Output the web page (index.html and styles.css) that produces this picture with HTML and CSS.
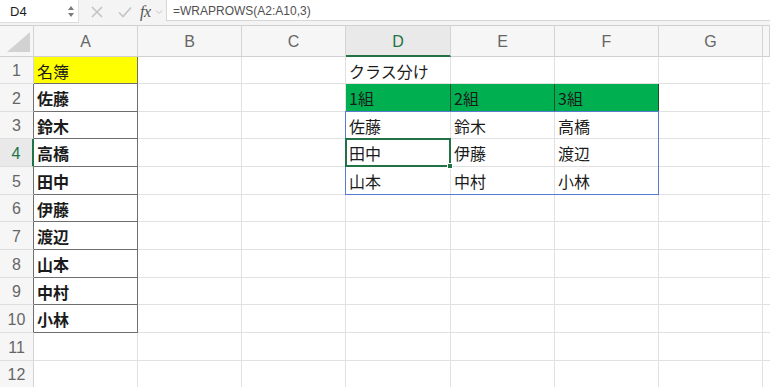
FILE: index.html
```html
<!DOCTYPE html>
<html lang="ja">
<head>
<meta charset="utf-8">
<link rel="stylesheet" href="styles.css">
</head>
<body>
<div class="fbar">
  <div class="namebox">
    <span class="nb-text">D4</span>
    <span class="spin"><span class="up"></span><span class="dn"></span></span>
  </div>
  <div class="ficons">
    <svg class="ic-x" width="14" height="14" viewBox="0 0 14 14"><path d="M2 2 L12 12 M12 2 L2 12" stroke="#c4c4c4" stroke-width="1.6" fill="none"/></svg>
    <svg class="ic-ok" width="16" height="14" viewBox="0 0 16 14"><path d="M2 7.5 L6 11.5 L14 2.5" stroke="#c4c4c4" stroke-width="1.6" fill="none"/></svg>
    <span class="fx">fx</span>
    <svg class="ic-chev" width="8" height="6" viewBox="0 0 8 6"><path d="M1 1.5 L4 4.5 L7 1.5" stroke="#c4c4c4" stroke-width="1" fill="none"/></svg>
  </div>
  <div class="finput">=WRAPROWS(A2:A10,3)</div>
</div>
<div class="sheet">
  <div class="row hdr">
    <div class="rh corner"><span class="tri"></span></div>
    <div class="c ch">A</div><div class="c ch">B</div><div class="c ch">C</div><div class="c w ch sel">D</div><div class="c ch">E</div><div class="c ch">F</div><div class="c ch">G</div><div class="tail ch"></div>
  </div>
  <div class="row h27">
    <div class="rh">1</div>
    <div class="c yel bb">名簿</div><div class="c"></div><div class="c"></div><div class="c w">クラス分け</div><div class="c"></div><div class="c"></div><div class="c"></div><div class="tail"></div>
  </div>
  <div class="row h28">
    <div class="rh dk">2</div>
    <div class="c bx">佐藤</div><div class="c"></div><div class="c"></div><div class="c w grn">1組</div><div class="c grn">2組</div><div class="c grn">3組</div><div class="c"></div><div class="tail"></div>
  </div>
  <div class="row h27">
    <div class="rh dk">3</div>
    <div class="c bx">鈴木</div><div class="c"></div><div class="c"></div><div class="c w">佐藤</div><div class="c">鈴木</div><div class="c">高橋</div><div class="c"></div><div class="tail"></div>
  </div>
  <div class="row h28">
    <div class="rh selr">4</div>
    <div class="c bx">高橋</div><div class="c"></div><div class="c"></div><div class="c w">田中</div><div class="c">伊藤</div><div class="c">渡辺</div><div class="c"></div><div class="tail"></div>
  </div>
  <div class="row h28">
    <div class="rh dk">5</div>
    <div class="c bx">田中</div><div class="c"></div><div class="c"></div><div class="c w">山本</div><div class="c">中村</div><div class="c">小林</div><div class="c"></div><div class="tail"></div>
  </div>
  <div class="row h27">
    <div class="rh dk">6</div>
    <div class="c bx">伊藤</div><div class="c"></div><div class="c"></div><div class="c w"></div><div class="c"></div><div class="c"></div><div class="c"></div><div class="tail"></div>
  </div>
  <div class="row h28">
    <div class="rh dk">7</div>
    <div class="c bx">渡辺</div><div class="c"></div><div class="c"></div><div class="c w"></div><div class="c"></div><div class="c"></div><div class="c"></div><div class="tail"></div>
  </div>
  <div class="row h28">
    <div class="rh dk">8</div>
    <div class="c bx">山本</div><div class="c"></div><div class="c"></div><div class="c w"></div><div class="c"></div><div class="c"></div><div class="c"></div><div class="tail"></div>
  </div>
  <div class="row h27">
    <div class="rh dk">9</div>
    <div class="c bx">中村</div><div class="c"></div><div class="c"></div><div class="c w"></div><div class="c"></div><div class="c"></div><div class="c"></div><div class="tail"></div>
  </div>
  <div class="row h28">
    <div class="rh dk">10</div>
    <div class="c bx">小林</div><div class="c"></div><div class="c"></div><div class="c w"></div><div class="c"></div><div class="c"></div><div class="c"></div><div class="tail"></div>
  </div>
  <div class="row h28">
    <div class="rh">11</div>
    <div class="c"></div><div class="c"></div><div class="c"></div><div class="c w"></div><div class="c"></div><div class="c"></div><div class="c"></div><div class="tail"></div>
  </div>
  <div class="row h27">
    <div class="rh">12</div>
    <div class="c"></div><div class="c"></div><div class="c"></div><div class="c w"></div><div class="c"></div><div class="c"></div><div class="c"></div><div class="tail"></div>
  </div>
  <div class="spill"></div>
  <div class="selbox"><span class="handle"></span></div>
</div>
</body>
</html>
```
FILE: styles.css
```css
* { box-sizing: border-box; }
html, body { margin: 0; padding: 0; background: #ffffff; }
body {
  width: 770px; height: 387px; overflow: hidden;
  font-family: "Liberation Sans", "Noto Sans CJK JP", sans-serif;
}
.fbar {
  height: 26px;
  display: flex;
  align-items: flex-start;
  background: #f4f4f4;
  border-bottom: 1px solid #d0d0d0;
  position: relative;
}
.namebox {
  width: 79px; height: 23px;
  background: #ffffff;
  border-bottom: 1px solid #dcdcdc;
  border-right: 1px solid #e2e2e2;
  display: flex; align-items: center; justify-content: space-between;
  padding: 0 4px 0 10px;
}
.nb-text { font-size: 13px; color: #1e1e1e; }
.spin { display: flex; flex-direction: column; gap: 3px; }
.up, .dn { width: 0; height: 0; border-left: 3px solid transparent; border-right: 3px solid transparent; }
.up { border-bottom: 4px solid #7a7a7a; }
.dn { border-top: 4px solid #7a7a7a; }
.ficons {
  width: 87px; height: 23px;
  display: flex; align-items: center;
  padding-left: 11px;
}
.ic-x { margin-right: 13px; }
.ic-ok { margin-right: 7px; }
.fx {
  font-family: "Liberation Serif", serif; font-style: italic;
  font-size: 16px; color: #555555; margin-right: 4px; letter-spacing: -0.5px;
}
.finput {
  flex: 1; height: 21px;
  background: #ffffff;
  border-left: 1px solid #d6d6d6;
  border-bottom: 1px solid #d6d6d6;
  font-size: 12px; color: #505050;
  padding: 4px 0 0 6px;
}
.sheet { position: relative; }
.row { display: flex; }
.hdr { height: 31px; }
.h27 { height: 27px; }
.h28 { height: 28px; }
.rh {
  width: 34px; flex: none;
  background: #f6f6f6;
  border-right: 1px solid #d4d4d4;
  border-bottom: 1px solid #dedede;
  color: #666666; font-size: 16px;
  display: flex; align-items: center; justify-content: center;
  padding-top: 2px;
}
.rh.dk { border-right-color: #6f6f6f; }
.rh.selr {
  background: #e9e9e9; color: #217346;
  border-right: 2px solid #217346;
}
.corner { padding: 0; position: relative; border-bottom-color: #d0d0d0; }
.tri {
  position: absolute; right: 3px; bottom: 4px;
  width: 0; height: 0;
  border-left: 23px solid transparent;
  border-bottom: 20px solid #d2d2d2;
}
.c {
  width: 104px; flex: none;
  border-right: 1px solid #e1e1e1;
  border-bottom: 1px solid #e1e1e1;
  font-family: "Noto Sans CJK JP", sans-serif;
  font-size: 16px; color: #1b1b1b;
  padding: 3px 0 0 3px;
  white-space: nowrap; overflow: hidden;
  line-height: 22px;
}
.c.w { width: 105px; }
.tail { flex: 1; border-bottom: 1px solid #e1e1e1; }
.ch, .tail.ch {
  background: #f6f6f6;
  border-right: 1px solid #d4d4d4;
  border-bottom: 1px solid #d0d0d0;
  font-family: "Liberation Sans", sans-serif;
  font-size: 16px; color: #666666;
  display: flex; align-items: center; justify-content: center;
  padding: 2px 0 0 0;
}
.ch.sel {
  background: #e9e9e9; color: #217346;
  border-bottom: 2px solid #217346;
  padding-top: 3px;
}
.yel { background: #ffff00; border-right-color: #6f6f6f; }
.bb { border-bottom-color: #6f6f6f; }
.bx {
  font-weight: bold;
  border-right-color: #6f6f6f;
  border-bottom-color: #6f6f6f;
}
.grn {
  background: #00b050;
  border-right-color: #1d4f30;
  border-bottom-color: #1d4f30;
}
.spill {
  position: absolute;
  left: 345px; top: 85px;
  width: 314px; height: 84px;
  border: 1px solid #5a7bd0;
}
.selbox {
  position: absolute;
  left: 345px; top: 112px;
  width: 106px; height: 29px;
  border: 2px solid #217346;
}
.handle {
  position: absolute;
  right: -4px; bottom: -4px;
  width: 6px; height: 6px;
  background: #217346;
  border: 1px solid #ffffff;
}
```
